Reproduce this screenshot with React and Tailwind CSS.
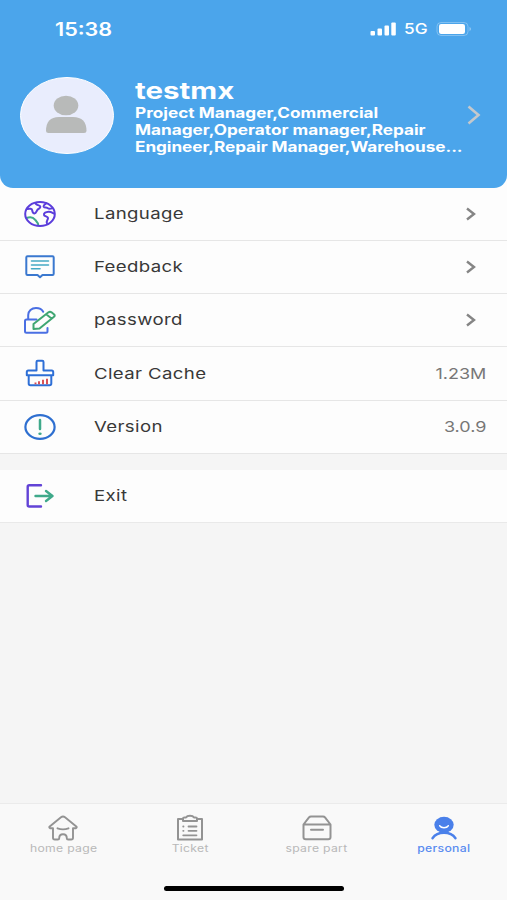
const GlobeIcon = () => (
  <svg width="34" height="28" viewBox="0 0 34 28" fill="none" stroke="#5b3ddb" strokeWidth="2" strokeLinecap="round" strokeLinejoin="round">
    <path d="M3.500 18c4-1.500 6.800-.6 8.500 1.600 1.500 1.800 3.300 3.400 3.300 5.600" stroke="#3fa98a" />
    <ellipse cx="17" cy="14" rx="14.800" ry="12" />
    <path d="M4.500 9c2-.6 4.500-.3 4.700 1.300.2 1.700.3 3 2 3.200 2.300.2 2-2.500 3.500-4 1.500-1.300 3-1.500 2.600-3-.4-1.300-2.800-.8-4.800-3" />
    <path d="M23.500 3.200c-1.500 1-3.500 2.300-2.800 3.600.7 1.200 2.700.4 3.800 1.200 1.500 1.200 3.200.8 4.500.4" />
    <path d="M31 13.500c-2-1-3.500-2-5.500-1.800-2.500.3-5 1.300-4.500 3.200.4 1.700 3.700 1.300 4 3 .3 1.800-2.300 3-1 5.500" />
  </svg>
);

const FeedbackIcon = () => (
  <svg width="34" height="28" viewBox="0 0 34 28" fill="none" strokeWidth="2" strokeLinecap="round" strokeLinejoin="round">
    <path d="M4.500 3.300h25a1.200 1.200 0 0 1 1.200 1.200v16.300a1.200 1.200 0 0 1-1.200 1.200H19.500L17 24.300l-2.500-2.300H4.500a1.200 1.200 0 0 1-1.200-1.200V4.500a1.200 1.200 0 0 1 1.200-1.200z" stroke="#3a78cf" />
    <path d="M8.500 8h17M8.500 12h17M8.500 15.800h8.500" stroke="#45a9c4" strokeWidth="1.600" />
  </svg>
);

const PasswordIcon = () => (
  <svg width="34" height="28" viewBox="0 0 34 28" fill="none" strokeWidth="2" strokeLinecap="round" strokeLinejoin="round">
    <path d="M13.500 13.500H3.500Q2 13.500 2 15v10.300q0 1.500 1.500 1.500h19.500q1.500 0 1.500-1.500V22M5.200 13V9c0-4 3.400-7 7.800-7 3.500 0 6 1.500 7.200 3.800" stroke="#4a6fe3" />
    <path d="M10.500 23v-5L25.500 6.300q1.500-1 3 0l2.700 2.200q1.200 1.300-.5 2.500L16.500 22.500zM23.500 8.500l5 4" stroke="#3fa672" />
  </svg>
);

const CacheIcon = () => (
  <svg width="34" height="28" viewBox="0 0 34 28" fill="none" strokeWidth="2" strokeLinecap="round" strokeLinejoin="round">
    <path d="M13.500 11.500V3q0-1.200 1.200-1.200h4.600q1.200 0 1.200 1.200v8.500h8.200q1.500 0 1.500 1.500v3.200H3.800V13q0-1.500 1.500-1.500zM5.700 16.500v8q0 1.700 1.700 1.700h19.200q1.700 0 1.700-1.700v-8" stroke="#2e6fd6" />
    <path d="M12.500 23.400v1.800M16 22.200v3M20 20.800v4.400M24 19.800v5.400" stroke="#d64a50" strokeWidth="1.900" strokeLinecap="butt" />
  </svg>
);

const VersionIcon = () => (
  <svg width="34" height="28" viewBox="0 0 34 28" fill="none" strokeWidth="2.200" strokeLinecap="round">
    <ellipse cx="17" cy="14" rx="14.600" ry="11.800" stroke="#2e6fd0" />
    <path d="M17 7v9" stroke="#3fa98a" strokeWidth="2.500" />
    <ellipse cx="17" cy="20.800" rx="1.700" ry="1.300" fill="#3fa98a" />
  </svg>
);

const ExitIcon = () => (
  <svg width="34" height="28" viewBox="0 0 34 28" fill="none" strokeWidth="2.400" strokeLinecap="round" strokeLinejoin="round">
    <path d="M18 3.300H6.200Q4.700 3.300 4.700 4.700v18.400q0 1.400 1.500 1.400H18" stroke="#6243d6" />
    <path d="M12.500 14H29.500M23 9l6.500 5-6.500 5" stroke="#3fa98a" />
  </svg>
);

const HomeIcon = () => (
  <svg width="32" height="28" viewBox="0 0 32 28" fill="none" stroke="#939393" strokeWidth="1.900" strokeLinecap="round" strokeLinejoin="round">
    <path d="M16 2.500q1 0 2 .8l11.300 9.200q1 1-.3 1.700h-3v9.500q0 1.800-1.800 1.800h-3q-1.400 0-1.400-1.300c0-2.500-1.500-4-3.800-4s-3.800 1.500-3.800 4q0 1.300-1.400 1.300h-3Q6 25.500 6 23.700v-9.500H3q-1.300-.7-.3-1.700L14 3.300q1-.8 2-.8z" />
    <path d="M10.500 14.300c3.300 1.300 7.700 1.300 11 0" />
  </svg>
);

const TicketIcon = () => (
  <svg width="32" height="28" viewBox="0 0 32 28" fill="none" stroke="#939393" strokeWidth="2" strokeLinecap="round" strokeLinejoin="round">
    <path d="M9 5H4v20.500h24V5h-5" />
    <path d="M9 7V4.500q0-1 1.500-1H12q1-1.700 4-1.700t4 1.700h1.500q1.500 0 1.500 1V7z" />
    <path d="M9.200 12.500h.3M14.500 12.500h8M9.200 16.800h.3M14.500 16.800h8M9.200 21.300h13.300" strokeWidth="1.800" />
  </svg>
);

const PartIcon = () => (
  <svg width="32" height="28" viewBox="0 0 32 28" fill="none" stroke="#939393" strokeWidth="2" strokeLinecap="round" strokeLinejoin="round">
    <path d="M2.500 10.500L8 3.300Q8.700 2.500 10 2.500h12q1.300 0 2 .8l5.500 7.200v12.800q0 2-2.300 2H4.800q-2.300 0-2.300-2zM2.500 10.500h27M10 15.800h12" />
  </svg>
);

const PersonalIcon = () => (
  <svg width="32" height="28" viewBox="0 0 32 28" fill="none" strokeLinecap="round">
    <ellipse cx="16" cy="10.800" rx="9.700" ry="8" fill="#4a80ea" />
    <path d="M4.500 24.200C9.500 17 22.500 17 27.500 24.200" stroke="#4a80ea" strokeWidth="2.400" />
    <path d="M11.800 11.800c1.500 2.500 6.900 2.500 8.400 0" stroke="#fff" strokeWidth="1.600" />
  </svg>
);

const Arrow = () => (
  <svg width="12" height="14" viewBox="0 0 12 14" fill="none" stroke="#858585" strokeWidth="2.400">
    <path d="M2 1.500l7 5.500L2 12.500" />
  </svg>
);

const menu = [
  { label: "Language", icon: GlobeIcon, arrow: true },
  { label: "Feedback", icon: FeedbackIcon, arrow: true },
  { label: "password", icon: PasswordIcon, arrow: true },
  { label: "Clear Cache", icon: CacheIcon, value: "1.23M" },
  { label: "Version", icon: VersionIcon, value: "3.0.9" },
];

const tabs = [
  { label: "home page", icon: HomeIcon },
  { label: "Ticket", icon: TicketIcon },
  { label: "spare part", icon: PartIcon },
  { label: "personal", icon: PersonalIcon, active: true },
];

function Row({ item }) {
  const Icon = item.icon;
  return (
    <div className="flex h-full items-center pl-[23px] pr-[21px]">
      <Icon />
      <span className="ml-[37px] origin-left scale-x-[1.24] pt-px text-[15px] tracking-[0.3px] text-[#383838]">{item.label}</span>
      <div className="ml-auto">
        {item.value && (
          <span className="block origin-right scale-x-[1.2] pt-px text-[15px] text-[#777]">{item.value}</span>
        )}
        {item.arrow && <div className="pr-[9px]"><Arrow /></div>}
      </div>
    </div>
  );
}

export default function App() {
  return (
    <div className="flex h-[900px] w-[507px] flex-col overflow-hidden bg-[#f5f5f5] font-['Inter',sans-serif]">
      <div className="bg-[#fdfdfd]">
        <header className="h-[187.500px] rounded-b-[13px] bg-[#4ba5eb] text-white">
          <div className="flex h-[57px] items-center pl-[55px] pr-[35px]">
            <span className="origin-left scale-x-[1.2] pt-px text-[18px] font-semibold">15:38</span>
            <div className="ml-auto flex items-center">
              <svg width="26" height="14" viewBox="0 0 26 14" fill="#fff">
                <rect x="0.500" y="9" width="4.500" height="4.500" rx="1" />
                <rect x="7.500" y="6.500" width="4.500" height="7" rx="1" />
                <rect x="14.500" y="3.500" width="4.500" height="10" rx="1" />
                <rect x="21.300" y="0.500" width="4.500" height="13" rx="1" />
              </svg>
              <span className="ml-2 w-[26px] origin-left scale-x-[1.15] pt-[2px] text-[15px] font-medium">5G</span>
              <svg className="ml-[6px]" width="36" height="14" viewBox="0 0 36 14">
                <rect x="1" y="0.500" width="31" height="13" rx="4" fill="none" stroke="#fff" strokeOpacity="0.300" />
                <rect x="3" y="2" width="26" height="10" rx="2.200" fill="#fff" />
                <path d="M33.500 5v4q1.500-.6 1.500-2t-1.500-2z" fill="#fff" fillOpacity="0.400" />
              </svg>
            </div>
          </div>
          <div className="flex items-start pl-[20px] pt-5">
            <svg width="94" height="77" viewBox="0 0 94 77">
              <ellipse cx="47" cy="38.500" rx="46.500" ry="38" fill="#e9edfd" stroke="#fff" />
              <ellipse cx="46" cy="28.500" rx="12.300" ry="9.800" fill="#b8bab9" />
              <path d="M26 54q0-14 13-14h14q13.500 0 13.500 14 0 2-2.500 2H28.500Q26 56 26 54z" fill="#b8bab9" />
            </svg>
            <div className="ml-[21px] w-[332px]">
              <div className="w-max origin-left scale-x-[1.28] pt-px text-[23px] leading-[26px] font-bold">testmx</div>
              <div className="w-max origin-left scale-x-[1.228] text-[14px] leading-[17px] font-bold">
                <div>Project Manager,Commercial</div>
                <div>Manager,Operator manager,Repair</div>
                <div className="tracking-[-0.05px]">Engineer,Repair Manager,Warehouse...</div>
              </div>
            </div>
            <svg className="mt-[28px]" width="14" height="20" viewBox="0 0 14 20" fill="none" stroke="#c4c8cc" strokeWidth="2.600">
              <path d="M1.500 1.500L11.500 10 1.500 18.500" />
            </svg>
          </div>
        </header>
        {menu.map((item) => (
          <div key={item.label} className="h-[53.250px] border-b border-[#e6e6e6]">
            <Row item={item} />
          </div>
        ))}
      </div>
      <div className="mt-[16px] h-[53px] border-b border-[#e9e9e9] bg-[#fdfdfd]">
        <Row item={{ label: "Exit", icon: ExitIcon }} />
      </div>
      <nav className="mt-auto flex h-[97px] flex-col border-t border-[#ebebeb] bg-[#f9f9f9]">
        <div className="grid grid-cols-4 pt-[10px]">
          {tabs.map(({ label, icon: Icon, active }) => (
            <div key={label} className="flex flex-col items-center">
              <Icon />
              <span className={`scale-x-[1.22] text-[10px] leading-[13px] tracking-[0.25px] ${active ? "font-medium text-[#5a8cf0]" : "text-[#b8b8b8]"}`}>
                {label}
              </span>
            </div>
          ))}
        </div>
        <div className="mx-auto mt-auto mb-[9px] h-[5px] w-[180px] rounded-full bg-black" />
      </nav>
    </div>
  );
}
